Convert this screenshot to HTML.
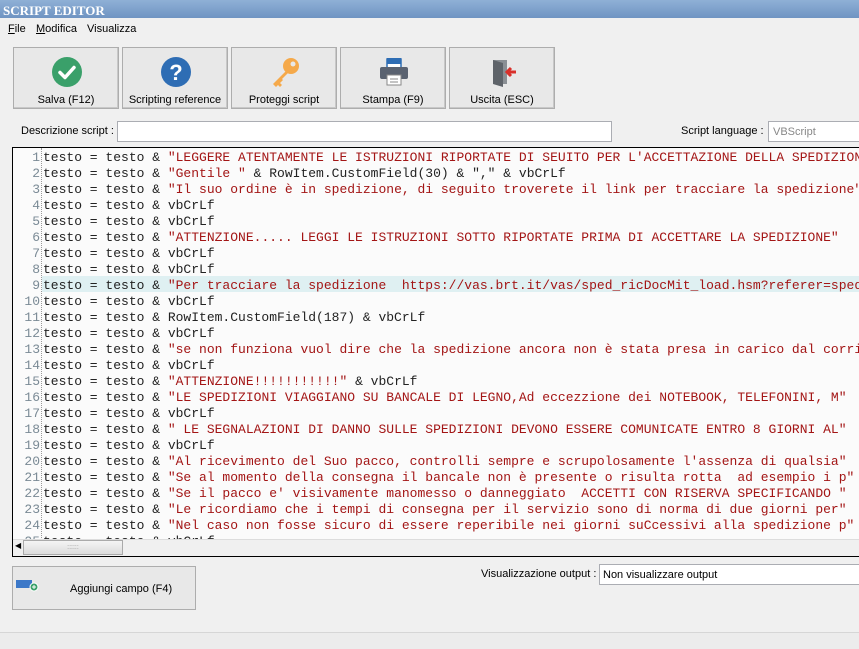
<!DOCTYPE html>
<html><head><meta charset="utf-8"><style>
*{margin:0;padding:0;box-sizing:border-box}
body{width:859px;height:649px;overflow:hidden;background:#f0f0f0;font-family:"Liberation Sans",sans-serif;font-size:11px;color:#000;position:relative}
.abs{position:absolute}
.title{left:0;top:0;width:859px;height:18px;background:linear-gradient(#8fb0d6,#6f94c2);color:#fff;font-family:"Liberation Serif",serif;font-weight:bold;font-size:13px;padding:3px 0 0 3px;letter-spacing:0}
.menu span{position:absolute;top:23px;font-size:11px}
.btn{position:absolute;top:47px;height:62px;width:106px;background:#e8e8e8;border:1px solid #adadad;box-shadow:inset -1px -1px 0 #c8c8c8;text-align:center}
.btn .lbl{position:absolute;left:0;right:0;top:46px;font-size:11px}
.btn svg{position:absolute;left:37px;top:8px}
.input{background:#fff;border:1px solid #abadb3}
.code{left:12px;top:147px;width:850px;height:410px;border:1px solid #000;border-right:none;background:#fbfbfb;overflow:hidden}
.ln{position:absolute;left:0;width:27px;text-align:right;color:#7a8a95;font-family:"Liberation Mono",monospace;font-size:13px}
.tx{position:absolute;left:30px;white-space:pre;font-family:"Liberation Mono",monospace;font-size:13px;color:#222}
.s{color:#a31515}
.gut{position:absolute;left:28px;top:0;height:392px;border-left:1px dotted #999}
</style></head><body>
<div class="abs title">SCRIPT EDITOR</div>
<div class="menu"><span style="left:8px"><u>F</u>ile</span><span style="left:36px"><u>M</u>odifica</span><span style="left:87px">Visualizza</span></div>

<div class="btn" style="left:13px"><svg width="32" height="32"><circle cx="16" cy="16" r="15" fill="#3aa06a"/><path d="M9 16.5l5 5 9-10" stroke="#fff" stroke-width="3.5" fill="none" stroke-linecap="round" stroke-linejoin="round"/></svg><div class="lbl">Salva (F12)</div></div>
<div class="btn" style="left:122px"><svg width="32" height="32"><circle cx="16" cy="16" r="15" fill="#2e6db4"/><text x="16" y="24" text-anchor="middle" fill="#fff" font-size="22" font-weight="bold" font-family="Liberation Sans">?</text></svg><div class="lbl">Scripting reference</div></div>
<div class="btn" style="left:231px"><svg width="32" height="32"><circle cx="22" cy="10" r="8" fill="#f5a94a"/><circle cx="24" cy="8" r="2.5" fill="#e8e8e8"/><path d="M17 15L4 28l3 3 2-2 2 2 2-2-2-2 3-3-1-1 8-8z" fill="#f5a94a"/></svg><div class="lbl">Proteggi script</div></div>
<div class="btn" style="left:340px"><svg width="32" height="32"><rect x="9" y="3" width="14" height="9" fill="#fff" stroke="#2e6db4" stroke-width="1.5"/><rect x="2" y="11" width="28" height="12" rx="2" fill="#5a6270"/><rect x="9" y="19" width="14" height="10" fill="#fff" stroke="#888"/><line x1="12" y1="23" x2="20" y2="23" stroke="#888"/><line x1="12" y1="26" x2="20" y2="26" stroke="#888"/><rect x="9" y="2" width="14" height="6" fill="#2e6db4"/></svg><div class="lbl">Stampa (F9)</div></div>
<div class="btn" style="left:449px"><svg width="32" height="32"><path d="M6 4h14v24H6z" fill="#8a8f94"/><path d="M6 4l10 3v24L6 28z" fill="#5e6369"/><path d="M29 16H20M24 12l-4 4 4 4" stroke="#d9302b" stroke-width="3" fill="none"/></svg><div class="lbl">Uscita (ESC)</div></div>

<div class="abs" style="left:21px;top:125px">Descrizione script :</div>
<div class="abs input" style="left:117px;top:121px;width:495px;height:21px"></div>
<div class="abs" style="left:681px;top:125px">Script language :</div>
<div class="abs input" style="left:768px;top:121px;width:95px;height:21px;color:#888;padding:4px 0 0 4px">VBScript</div>

<div class="abs code">
<div class="abs" style="left:29px;top:128px;width:830px;height:16px;background:#dff0f2"></div>
<div class="gut"></div>
<div id="c"></div>
<div class="abs" style="left:0;top:391px;width:850px;height:17px;background:#f0f0f0;border-top:1px solid #ddd"></div>
<div class="abs" style="left:2px;top:393px;width:8px;height:13px;font-size:8px">◀</div>
<div class="abs" style="left:10px;top:392px;width:100px;height:15px;background:linear-gradient(#f4f4f4,#dcdcdc);border:1px solid #aaa;text-align:center;color:#999;font-size:7px;line-height:13px">::::::</div>
</div>

<div class="abs" style="left:12px;top:566px;width:184px;height:44px;background:#e8e8e8;border:1px solid #adadad">
<svg class="abs" style="left:2px;top:10px" width="24" height="16"><rect x="1" y="3" width="16" height="8" fill="#3c78c8"/><circle cx="19" cy="10" r="4" fill="#3aa06a" stroke="#fff"/><path d="M17 10h4M19 8v4" stroke="#fff"/></svg>
<div class="abs" style="left:57px;top:16px">Aggiungi campo (F4)</div></div>
<div class="abs" style="left:481px;top:568px">Visualizzazione output :</div>
<div class="abs input" style="left:599px;top:564px;width:262px;height:21px;padding:4px 0 0 3px">Non visualizzare output</div>
<div class="abs" style="left:0;top:632px;width:859px;height:17px;border-top:1px solid #d6d6d6;background:#ececec"></div>

<script>
var L=[
['"LEGGERE ATENTAMENTE LE ISTRUZIONI RIPORTATE DI SEUITO PER L\'ACCETTAZIONE DELLA SPEDIZIONE"',''],
['"Gentile "',' & RowItem.CustomField(30) & "," & vbCrLf'],
['"Il suo ordine è in spedizione, di seguito troverete il link per tracciare la spedizione"',''],
['','vbCrLf'],['','vbCrLf'],
['"ATTENZIONE..... LEGGI LE ISTRUZIONI SOTTO RIPORTATE PRIMA DI ACCETTARE LA SPEDIZIONE"',''],
['','vbCrLf'],['','vbCrLf'],
['"Per tracciare la spedizione  https://vas.brt.it/vas/sped_ricDocMit_load.hsm?referer=sped"',''],
['','vbCrLf'],['','RowItem.CustomField(187) & vbCrLf'],['','vbCrLf'],
['"se non funziona vuol dire che la spedizione ancora non è stata presa in carico dal corriere"',''],
['','vbCrLf'],['"ATTENZIONE!!!!!!!!!!!"',' & vbCrLf'],
['"LE SPEDIZIONI VIAGGIANO SU BANCALE DI LEGNO,Ad eccezzione dei NOTEBOOK, TELEFONINI, M"',''],
['','vbCrLf'],['" LE SEGNALAZIONI DI DANNO SULLE SPEDIZIONI DEVONO ESSERE COMUNICATE ENTRO 8 GIORNI AL"',''],
['','vbCrLf'],['"Al ricevimento del Suo pacco, controlli sempre e scrupolosamente l\'assenza di qualsia"',''],
['"Se al momento della consegna il bancale non è presente o risulta rotta  ad esempio i p"',''],
['"Se il pacco e\' visivamente manomesso o danneggiato  ACCETTI CON RISERVA SPECIFICANDO "',''],
['"Le ricordiamo che i tempi di consegna per il servizio sono di norma di due giorni per"',''],
['"Nel caso non fosse sicuro di essere reperibile nei giorni suCcessivi alla spedizione p"',''],
['','vbCrLf']];
var h='';
L.forEach(function(l,i){var t=2+i*16;
h+='<div class="ln" style="top:'+t+'px">'+(i+1)+'</div><div class="tx" style="top:'+t+'px">testo = testo &amp; '+(l[0]?'<span class="s">'+l[0].replace(/&/g,'&amp;')+'</span>':'')+l[1].replace(/&/g,'&amp;')+'</div>';});
document.getElementById('c').innerHTML=h;
</script>
</body></html>
